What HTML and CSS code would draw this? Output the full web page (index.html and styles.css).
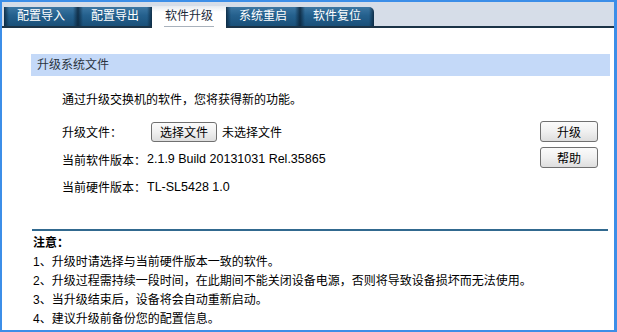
FILE: index.html
```html
<!DOCTYPE html>
<html lang="zh-CN">
<head>
<meta charset="utf-8">
<title>软件升级</title>
<link rel="stylesheet" href="styles.css">
</head>
<body>
<div class="frame">
  <div class="tabbar">
    <div class="tab">配置导入</div>
    <div class="tab">配置导出</div>
    <div class="tab active"><span class="tab-label">软件升级</span></div>
    <div class="tab">系统重启</div>
    <div class="tab last">软件复位</div>
  </div>
  <div class="content">
    <div class="section-title">升级系统文件</div>
    <p class="intro">通过升级交换机的软件，您将获得新的功能。</p>
    <div class="form">
      <div class="fields">
        <div class="row">
          <span class="label">升级文件：</span>
          <button class="btn file-btn" type="button">选择文件</button>
          <span class="file-name">未选择文件</span>
        </div>
        <div class="row">
          <span class="label">当前软件版本：</span>
          <span class="value">2.1.9 Build 20131031 Rel.35865</span>
        </div>
        <div class="row">
          <span class="label">当前硬件版本：</span>
          <span class="value">TL-SL5428 1.0</span>
        </div>
      </div>
      <div class="actions">
        <button class="btn action-btn" type="button">升级</button>
        <button class="btn action-btn" type="button">帮助</button>
      </div>
    </div>
    <div class="divider"></div>
    <div class="notes">
      <div class="notes-title">注意：</div>
      <div>1、升级时请选择与当前硬件版本一致的软件。</div>
      <div>2、升级过程需持续一段时间，在此期间不能关闭设备电源，否则将导致设备损坏而无法使用。</div>
      <div>3、当升级结束后，设备将会自动重新启动。</div>
      <div>4、建议升级前备份您的配置信息。</div>
    </div>
  </div>
</div>
</body>
</html>
```

FILE: styles.css
```css
html, body {
  margin: 0;
  padding: 0;
  background: #ffffff;
}

body {
  font-family: "Liberation Sans", "Noto Sans CJK SC", sans-serif;
  font-size: 12px;
  color: #000000;
}

.frame {
  box-sizing: border-box;
  width: 617px;
  height: 332px;
  border: 2px solid #3c8ee8;
  border-right-width: 3px;
  overflow: hidden;
  background: #ffffff;
}

.tabbar {
  display: flex;
  align-items: flex-end;
  height: 24px;
  padding-left: 2px;
  background: #d6dde8;
  border-bottom: 2px solid #1b3346;
}

.tab {
  box-sizing: border-box;
  width: 74px;
  height: 19px;
  line-height: 19px;
  text-align: center;
  color: #ffffff;
  background:
    linear-gradient(to right, rgba(8, 30, 50, 0.75) 0, rgba(8, 30, 50, 0) 5px, rgba(8, 30, 50, 0) calc(100% - 5px), rgba(8, 30, 50, 0.75) 100%),
    linear-gradient(to bottom, #3d77a3 0, #24608d 45%, #1a5079 100%);
}

.tab.last {
  border-top-right-radius: 5px;
}

.tab.active {
  height: 22px;
  margin-bottom: -2px;
  padding-top: 1px;
  color: #1b2a3a;
  background: linear-gradient(to bottom, #e6eaef 0, #ffffff 6px, #ffffff 100%);
  position: relative;
}

.tab-label {
  display: inline-block;
  line-height: 19px;
  padding: 0 1px;
  border-bottom: 1px solid #a9b2bc;
}

.content {
  padding: 26px 4px 0 29px;
}

.section-title {
  height: 22px;
  line-height: 22px;
  padding-left: 6px;
  background: #c4d9f8;
  color: #2b3440;
}

.intro {
  margin: 15px 0 0 31px;
  line-height: 18px;
}

.form {
  display: flex;
  justify-content: space-between;
  margin: 9px 12px 0 31px;
}

.fields {
  display: flex;
  flex-direction: column;
}

.row {
  display: flex;
  align-items: center;
  height: 27.5px;
}

.label {
  width: 85px;
}

.value {
  font-size: 12.5px;
}

.btn {
  box-sizing: border-box;
  padding: 0;
  font-family: "Liberation Sans", "Noto Sans CJK SC", sans-serif;
  font-size: 12px;
  color: #000000;
  border: 1px solid #707070;
  border-radius: 3px;
  background: linear-gradient(to bottom, #fbfbfb 0, #f0f0f0 50%, #dedede 100%);
}

.file-btn {
  width: 66px;
  height: 20px;
  margin-left: 4px;
}

.file-name {
  margin-left: 5px;
}

.actions {
  display: flex;
  flex-direction: column;
  gap: 5px;
  padding-top: 3px;
}

.action-btn {
  width: 58px;
  height: 21px;
}

.divider {
  height: 2px;
  margin: 28px 2px 0 1px;
  background: #31698f;
}

.notes {
  margin: 3px 0 0 2px;
  line-height: 19px;
}

.notes-title {
  font-weight: bold;
}
```
